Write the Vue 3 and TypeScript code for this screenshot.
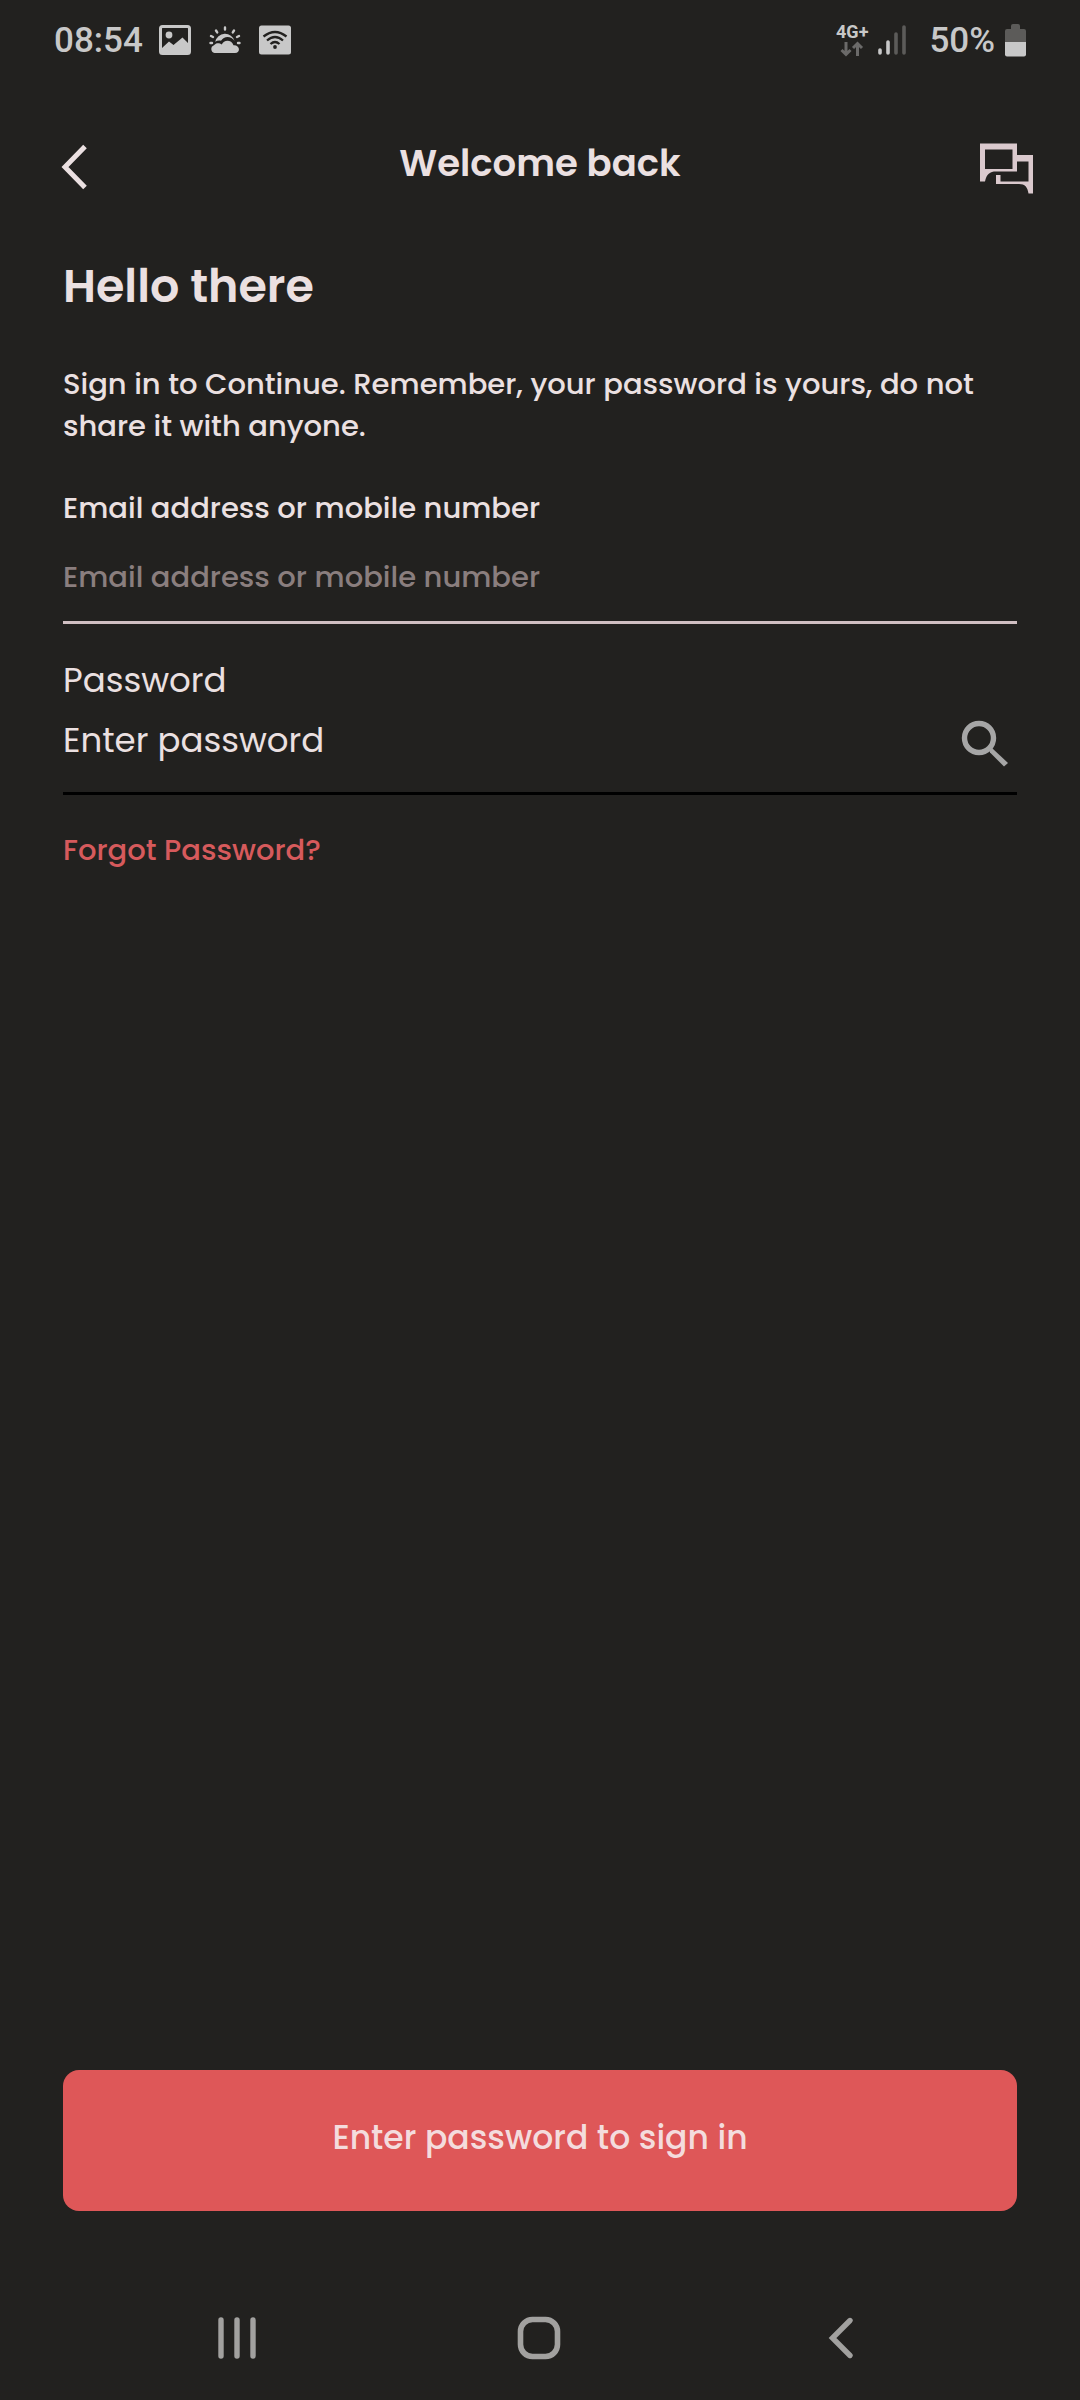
<script setup lang="ts">
import { ref } from 'vue'

const account = ref('')
const password = ref('')
</script>

<template>
  <div class="screen">
    <div class="status-bar">
      <div class="status-group">
        <span class="status-text">08:54</span>
        <div class="notices">
          <svg width="32" height="30" viewBox="0 0 32 30" aria-hidden="true">
            <rect x="1.5" y="1.5" width="29" height="27" rx="2" fill="none" stroke="#c8c8c8" stroke-width="3" />
            <circle cx="10" cy="10" r="3.4" fill="#c8c8c8" />
            <path d="M3 23 L10 16.5 L14.5 20 L23.5 12.5 L29 18 V27 H3 Z" fill="#c8c8c8" />
          </svg>
          <svg width="32" height="30" viewBox="0 0 32 30" aria-hidden="true">
            <g stroke="#c8c8c8" stroke-width="2.4" stroke-linecap="round">
              <path d="M16 2.5 V4.5 M7 5.5 L8.2 7.4 M25 5.5 L23.8 7.4 M2 11 L4 12 M30 11 L28 12 M1.5 18 H3 M29 18 H30.5" />
            </g>
            <path d="M6.2 16.8 A10 10 0 0 1 25.6 16 C22.5 10.8 15 10.4 12 15.8 C10 15.200 8 15.700 6.2 16.8 Z" fill="#c8c8c8" />
            <path d="M5.500 28 A4 4 0 0 1 5 20.300 C7 17.500 10.500 17.800 12.800 19.600 C14.500 14.500 22.500 14 24.500 20.300 C31 19.800 32 28 26 28 Z" fill="#c8c8c8" />
          </svg>
          <svg width="32" height="30" viewBox="0 0 32 30" aria-hidden="true">
            <rect width="32" height="29" y="0.500" rx="2.500" fill="#c8c8c8" />
            <g fill="none" stroke="#22211f" stroke-width="2.300">
              <path d="M4.500 11.500 Q16 2.500 27.500 11.500" />
              <path d="M8 15.500 Q16 8.500 24 15.500" />
              <path d="M11.500 19 Q16 15 20.500 19" />
            </g>
            <circle cx="16" cy="22" r="1.900" fill="#22211f" />
          </svg>
        </div>
      </div>
      <div class="status-group">
        <div class="network">
          <span class="network-type">4G+</span>
          <svg width="24" height="16" viewBox="0 0 24 16" aria-hidden="true">
            <path d="M6 1 V13 M1.500 9 L6 13.500 L10.500 9 M17.500 15 V3 M13 7 L17.500 2.500 L22 7" fill="none" stroke="#6b6a69" stroke-width="3" />
          </svg>
        </div>
        <svg class="signal" width="28" height="32" viewBox="0 0 28 32" aria-hidden="true">
          <g stroke-width="3.600" stroke-linecap="round">
            <path d="M2 26 V29 M10 18 V29" stroke="#c8c8c8" />
            <path d="M18 10 V29 M26 3 V29" stroke="#5c5b59" />
          </g>
        </svg>
        <span class="status-text">50%</span>
        <svg class="battery" width="21" height="33" viewBox="0 0 21 33" aria-hidden="true">
          <path d="M6 5 V2 Q6 0 8 0 H13 Q15 0 15 2 V5 H19 Q21 5 21 7 V18 H0 V7 Q0 5 2 5 Z" fill="#5c5b59" />
          <path d="M0 18 H21 V30.500 Q21 32.500 19 32.500 H2 Q0 32.500 0 30.500 Z" fill="#c8c8c8" />
        </svg>
      </div>
    </div>

    <header class="app-bar">
      <button class="icon-button start" type="button" aria-label="Back">
        <svg width="28" height="46" viewBox="0 0 28 46" aria-hidden="true">
          <path d="M24 2.500 L4 23 L24 43.500" fill="none" stroke="#ebe0e1" stroke-width="5" />
        </svg>
      </button>
      <h1 class="app-title">Welcome back</h1>
      <button class="icon-button end" type="button" aria-label="Chat">
        <svg width="54" height="54" viewBox="0 -3 54 54" aria-hidden="true">
          <path
            fill="#dac9cd"
            fill-rule="evenodd"
            d="M0 0.500 H37 V12 H53 V50.500 H48.500 C47.500 44 45 41 39 41 H16 V32 H20.500 V38.500 H48.500 V18.500 H37 V28.500 H16 C10 28.500 6.500 31 5 38.500 H0 Z M5 6.500 V26 H32.500 V6.500 Z"
          />
        </svg>
      </button>
    </header>

    <form class="sign-in" @submit.prevent>
      <main class="content">
        <h2 class="greeting">Hello there</h2>
        <p class="intro">Sign in to Continue. Remember, your password is yours, do not share it with anyone.</p>

        <div class="field account-field">
          <label for="account">Email address or mobile number</label>
          <div class="entry">
            <input id="account" v-model="account" type="text" placeholder="Email address or mobile number" />
          </div>
        </div>

        <div class="field password-field">
          <label for="password">Password</label>
          <div class="entry">
            <input id="password" v-model="password" type="password" placeholder="Enter password" />
            <button class="icon-button reveal" type="button" aria-label="Show password">
              <svg width="48" height="48" viewBox="0 0 48 48" aria-hidden="true">
                <circle cx="18" cy="18" r="14.500" fill="none" stroke="#a6a6a6" stroke-width="5.400" />
                <path d="M28.500 28.500 L31 28 L47 43 L43 46.500 L29 32.500 Z" fill="#a6a6a6" />
              </svg>
            </button>
          </div>
        </div>

        <a class="forgot" href="#">Forgot Password?</a>
      </main>

      <div class="actions">
        <button class="submit" type="submit">Enter password to sign in</button>
      </div>
    </form>

    <nav class="system-nav" aria-label="System">
      <button class="icon-button" type="button" aria-label="Recent apps">
        <svg width="44" height="44" viewBox="0 0 44 44" aria-hidden="true">
          <path d="M6 4 V40 M22 4 V40 M38 4 V40" stroke="#a2a19f" stroke-width="5.400" stroke-linecap="round" />
        </svg>
      </button>
      <button class="icon-button" type="button" aria-label="Home">
        <svg width="44" height="44" viewBox="0 0 44 44" aria-hidden="true">
          <rect x="3.500" y="3.500" width="37" height="37" rx="12" fill="none" stroke="#a2a19f" stroke-width="5.600" />
        </svg>
      </button>
      <button class="icon-button" type="button" aria-label="Back">
        <svg width="44" height="44" viewBox="0 0 44 44" aria-hidden="true">
          <path d="M31 4.500 L13.500 22 L31 39.500" fill="none" stroke="#a2a19f" stroke-width="5.400" stroke-linecap="round" />
        </svg>
      </button>
    </nav>
  </div>
</template>

<style>
body {
  margin: 0;
  background: #22211f;
}
</style>

<style scoped>
.screen {
  display: flex;
  flex-direction: column;
  min-height: 100vh;
  background: #22211f;
  color: #ebe0e1;
  font-family: Poppins, Inter, sans-serif;
  font-size: 29px;
  font-weight: 500;
  line-height: 42px;
}

svg {
  display: block;
}

.status-bar {
  display: flex;
  justify-content: space-between;
  align-items: center;
  height: 80px;
  padding: 0 54px;
  color: #c8c8c8;
  font-family: Roboto, sans-serif;
}

.status-group {
  display: flex;
  align-items: center;
}

.status-text {
  padding-top: 2px;
  font-size: 35px;
}

.notices {
  display: flex;
  gap: 18px;
  margin-left: 16px;
}

.network {
  display: flex;
  flex-direction: column;
  align-items: center;
}

.network-type {
  font-size: 18px;
  font-weight: 700;
  line-height: 18px;
}

.signal {
  margin: 0 23px 0 10px;
}

.battery {
  margin-left: 10px;
}

.icon-button {
  display: block;
  padding: 0;
  border: 0;
  background: none;
  cursor: pointer;
}

.app-bar {
  display: grid;
  grid-template-columns: 1fr auto 1fr;
  align-items: center;
  height: 110px;
  margin: 32px 46px 36px;
}

.app-title {
  margin: 0 0 8px;
  font-size: 37px;
  font-weight: 600;
  line-height: 48px;
}

.start {
  justify-self: start;
  margin-left: 15px;
}

.end {
  justify-self: end;
}

.sign-in {
  display: flex;
  flex: 1;
  flex-direction: column;
  padding: 0 63px;
}

.content {
  flex: 1;
}

.greeting {
  margin: 0;
  font-size: 46px;
  font-weight: 600;
  line-height: 56px;
}

.intro {
  margin: 49px 0 40px;
}

.field {
  display: flex;
  flex-direction: column;
}

.account-field {
  gap: 27px;
  margin-bottom: 32px;
}

.entry {
  display: flex;
  align-items: flex-start;
  border-bottom: 3px solid #d0bfc2;
}

.entry input {
  flex: 1;
  min-width: 0;
  height: 42px;
  margin: 0 0 23px;
  padding: 0;
  border: 0;
  outline: 0;
  background: none;
  color: inherit;
  font: inherit;
}

.entry input::placeholder {
  color: #8a7e7e;
  opacity: 1;
}

.password-field {
  gap: 12px;
  font-size: 34px;
  font-weight: 400;
  line-height: 48px;
}

.password-field .entry {
  border-color: #000;
}

.password-field input {
  height: 48px;
  margin-bottom: 28px;
}

.password-field input::placeholder {
  color: #ebe0e1;
}

.reveal {
  margin: 4px 8px 0 0;
}

.forgot {
  display: inline-block;
  margin-top: 34px;
  color: #d65a5c;
  text-decoration: none;
}

.submit {
  display: block;
  width: 100%;
  margin-bottom: 65px;
  padding: 44px 24px 49px;
  border: 0;
  border-radius: 16px;
  background: #de5758;
  color: #f4dcdd;
  font: inherit;
  font-size: 33px;
  line-height: 48px;
  cursor: pointer;
}

.system-nav {
  display: grid;
  grid-template-columns: repeat(3, 1fr);
  place-items: center;
  height: 124px;
  padding: 0 88px 0 86px;
}
</style>
